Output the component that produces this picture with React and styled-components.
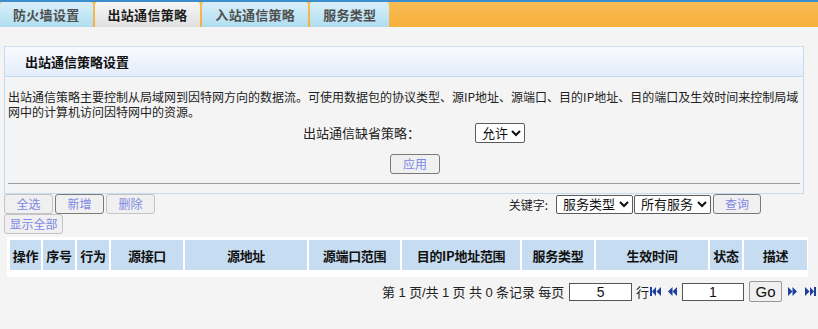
import React from "react";
import styled, { createGlobalStyle } from "styled-components";

const Global = createGlobalStyle`
  html, body { margin: 0; padding: 0; background: #f4f4f4; }
  body { font-family: "Liberation Sans", "Noto Sans CJK SC", sans-serif; color: #222; }
  * { box-sizing: border-box; }
`;

const Page = styled.div`
  width: 818px;
  height: 329px;
  overflow: hidden;
  background: #f4f4f4;
`;

const TopLine = styled.div`
  height: 2px;
  background: #3b8dcd;
`;

const TabBar = styled.div`
  display: flex;
  gap: 2px;
  height: 25px;
  background: linear-gradient(#f9bc57 0%, #f8b646 50%, #f8b03b 100%);
`;

const Tab = styled.div`
  height: 25px;
  padding: 0 ${(p) => p.$pad}px;
  display: flex;
  align-items: center;
  font-family: "Noto Sans CJK SC", sans-serif;
  font-size: 13px;
  font-weight: bold;
  line-height: 25px;
  letter-spacing: 0.3px;
  border-radius: 3px 3px 0 0;
  color: ${(p) => (p.$active ? "#1c1c1c" : "#505050")};
  background: ${(p) =>
    p.$active
      ? "linear-gradient(#f6f6f6 0%, #ececec 50%, #dfdfdf 100%)"
      : "linear-gradient(#d8eff9 0%, #c4e7f5 50%, #b1ddf1 100%)"};
`;

const Panel = styled.div`
  margin: 19px 0 0 4px;
  width: 800px;
  border: 1px solid #c5dcf0;
  border-top-color: #c9def2;
`;

const PanelHeader = styled.div`
  height: 30px;
  border-bottom: 1px solid #c5dcf0;
  background: linear-gradient(#f8fafe 0%, #eef3fc 50%, #e3edfb 100%);
  padding-left: 20px;
  display: flex;
  align-items: center;
  font-family: "Noto Sans CJK SC", sans-serif;
  font-size: 13px;
  font-weight: bold;
  color: #111;
`;

const PanelBody = styled.div`
  padding: 12px 3px 9px 3px;
`;

const Desc = styled.p`
  margin: 0;
  font-family: "Noto Sans CJK SC", sans-serif;
  font-size: 12px;
  line-height: 15px;
  color: #222;
`;

const PolicyRow = styled.div`
  margin-top: 4px;
  height: 20px;
  display: flex;
  align-items: center;
  padding-left: 295px;
`;

const Label = styled.span`
  width: ${(p) => p.$w || "auto"};
  font-family: "Noto Sans CJK SC", sans-serif;
  font-size: 13px;
  line-height: 20px;
  color: #222;
  white-space: nowrap;
`;

const Select = styled.select`
  width: ${(p) => p.$w}px;
  height: ${(p) => p.$h || 19}px;
  font-family: "Liberation Sans", "Noto Sans CJK SC", sans-serif;
  font-size: 13px;
  line-height: 15px;
  color: #111;
  border: 1px solid #5c5c5c;
  border-radius: 2px;
  background: #fff;
  padding: 0 0 0 2px;
  margin: 0;
`;

const ApplyRow = styled.div`
  margin-top: 11px;
  display: flex;
  justify-content: center;
  padding-left: 22px;
`;

const Btn = styled.button`
  width: ${(p) => p.$w}px;
  height: 20px;
  padding: 0;
  margin: 0;
  font-family: "Noto Sans CJK SC", sans-serif;
  font-size: 12px;
  line-height: 18px;
  color: #7f88e4;
  background: #f0f0f0;
  border: 1px solid ${(p) => (p.$dark ? "#7a7a7a" : "#c4c4c4")};
  border-radius: 3px;
`;

const Rule = styled.div`
  margin: 9px 0 0 0;
  height: 1px;
  background: #9c9c9c;
`;

const Toolbar = styled.div`
  width: 800px;
  margin-left: 4px;
  display: flex;
  justify-content: space-between;
  align-items: flex-start;
`;

const LeftGroup = styled.div`
  width: 151px;
  display: flex;
  flex-wrap: wrap;
  column-gap: 2px;
`;

const RightGroup = styled.div`
  margin-right: 43px;
  display: flex;
  align-items: center;
  height: 20px;
`;

const KeyLabel = styled.span`
  font-family: "Noto Sans CJK SC", sans-serif;
  font-size: 12px;
  color: #222;
  margin-right: 8px;
`;

const Spacer = styled.span`
  width: ${(p) => p.$w}px;
`;

const TableBox = styled.div`
  margin: 3px 0 0 7px;
  width: 801px;
  background: #fff;
  padding: 3px 1px 7px 3px;
`;

const HeadRow = styled.div`
  display: grid;
  grid-template-columns: 31px 32px 32px 72px 122px 91px 118px 72px 112px 32px 63px;
  column-gap: 2px;
`;

const HeadCell = styled.div`
  height: 30px;
  background: #c6dcf0;
  display: flex;
  align-items: center;
  justify-content: center;
  font-family: "Noto Sans CJK SC", sans-serif;
  font-size: 13px;
  font-weight: bold;
  color: #111;
  white-space: nowrap;
  letter-spacing: -0.3px;
`;

const Pager = styled.div`
  margin-top: 4px;
  display: flex;
  justify-content: flex-end;
  align-items: center;
  padding-right: 2px;
  height: 21px;
`;

const PagerText = styled.span`
  font-family: "Liberation Sans", "Noto Sans CJK SC", sans-serif;
  font-size: 13px;
  color: #222;
  margin-right: ${(p) => p.$mr || 0}px;
  white-space: pre;
  letter-spacing: -0.1px;
`;

const PageInput = styled.input`
  width: ${(p) => p.$w}px;
  height: 18px;
  margin: 0 ${(p) => p.$mr}px 0 0;
  padding: 0;
  border: 1px solid #555;
  background: #fff;
  text-align: center;
  font-family: "Liberation Sans", sans-serif;
  font-size: 14px;
  color: #111;
`;

const GoBtn = styled.button`
  width: 33px;
  height: 21px;
  margin: 0 6px 0 0;
  padding: 0;
  border: 1px solid #999;
  border-radius: 2px;
  background: #f0f0f0;
  font-family: "Liberation Sans", sans-serif;
  font-size: 15px;
  color: #111;
`;

const IconWrap = styled.span`
  display: inline-flex;
  margin-right: ${(p) => p.$mr || 0}px;
`;

const NAVY = "#1d3f9b";

const FirstIcon = () => (
  <svg width="11" height="9" viewBox="0 0 11 9">
    <rect x="0" y="0" width="2" height="9" fill={NAVY} />
    <polygon points="6,0 2,4.5 6,9" fill={NAVY} />
    <polygon points="11,0 6.5,4.5 11,9" fill={NAVY} />
  </svg>
);
const PrevIcon = () => (
  <svg width="9" height="9" viewBox="0 0 9 9">
    <polygon points="4.5,0 0,4.5 4.5,9" fill={NAVY} />
    <polygon points="9,0 4.5,4.5 9,9" fill={NAVY} />
  </svg>
);
const NextIcon = () => (
  <svg width="9" height="9" viewBox="0 0 9 9">
    <polygon points="0,0 4.5,4.5 0,9" fill={NAVY} />
    <polygon points="4.5,0 9,4.5 4.5,9" fill={NAVY} />
  </svg>
);
const LastIcon = () => (
  <svg width="11" height="9" viewBox="0 0 11 9">
    <polygon points="0,0 4.5,4.5 0,9" fill={NAVY} />
    <polygon points="5,0 9,4.5 5,9" fill={NAVY} />
    <rect x="9" y="0" width="2" height="9" fill={NAVY} />
  </svg>
);

const tabs = [
  { label: "防火墙设置", pad: 13 },
  { label: "出站通信策略", pad: 13, active: true },
  { label: "入站通信策略", pad: 13 },
  { label: "服务类型", pad: 13 },
];

const heads = ["操作", "序号", "行为", "源接口", "源地址", "源端口范围", "目的IP地址范围", "服务类型", "生效时间", "状态", "描述"];

export default function App() {
  return (
    <Page>
      <Global />
      <TopLine />
      <TabBar>
        {tabs.map((t) => (
          <Tab key={t.label} $active={t.active} $pad={t.pad}>
            {t.label}
          </Tab>
        ))}
      </TabBar>

      <Panel>
        <PanelHeader>出站通信策略设置</PanelHeader>
        <PanelBody>
          <Desc>
            出站通信策略主要控制从局域网到因特网方向的数据流。可使用数据包的协议类型、源IP地址、源端口、目的IP地址、目的端口及生效时间来控制局域网中的计算机访问因特网中的资源。
          </Desc>
          <PolicyRow>
            <Label $w="172px">出站通信缺省策略：</Label>
            <Select $w={50} $h={20} defaultValue="allow">
              <option value="allow">允许</option>
              <option value="deny">禁止</option>
            </Select>
          </PolicyRow>
          <ApplyRow>
            <Btn $w={50} $dark>应用</Btn>
          </ApplyRow>
          <Rule />
        </PanelBody>
      </Panel>

      <Toolbar>
        <LeftGroup>
          <Btn $w={49}>全选</Btn>
          <Btn $w={49} $dark>新增</Btn>
          <Btn $w={49}>删除</Btn>
          <Btn $w={59}>显示全部</Btn>
        </LeftGroup>
        <RightGroup>
          <KeyLabel>关键字:</KeyLabel>
          <Select $w={77} defaultValue="svc">
            <option value="svc">服务类型</option>
          </Select>
          <Spacer $w={1} />
          <Select $w={77} defaultValue="all">
            <option value="all">所有服务</option>
          </Select>
          <Spacer $w={2} />
          <Btn $w={48} $dark>查询</Btn>
        </RightGroup>
      </Toolbar>

      <TableBox>
        <HeadRow>
          {heads.map((h) => (
            <HeadCell key={h}>{h}</HeadCell>
          ))}
        </HeadRow>
      </TableBox>

      <Pager>
        <PagerText $mr={5}>第 1 页/共 1 页 共 0 条记录 每页</PagerText>
        <PageInput $w={63} $mr={4} defaultValue="5" />
        <PagerText $mr={1}>行</PagerText>
        <IconWrap $mr={7}><FirstIcon /></IconWrap>
        <IconWrap $mr={5}><PrevIcon /></IconWrap>
        <PageInput $w={62} $mr={5} defaultValue="1" />
        <GoBtn>Go</GoBtn>
        <IconWrap $mr={8}><NextIcon /></IconWrap>
        <IconWrap><LastIcon /></IconWrap>
      </Pager>
    </Page>
  );
}
